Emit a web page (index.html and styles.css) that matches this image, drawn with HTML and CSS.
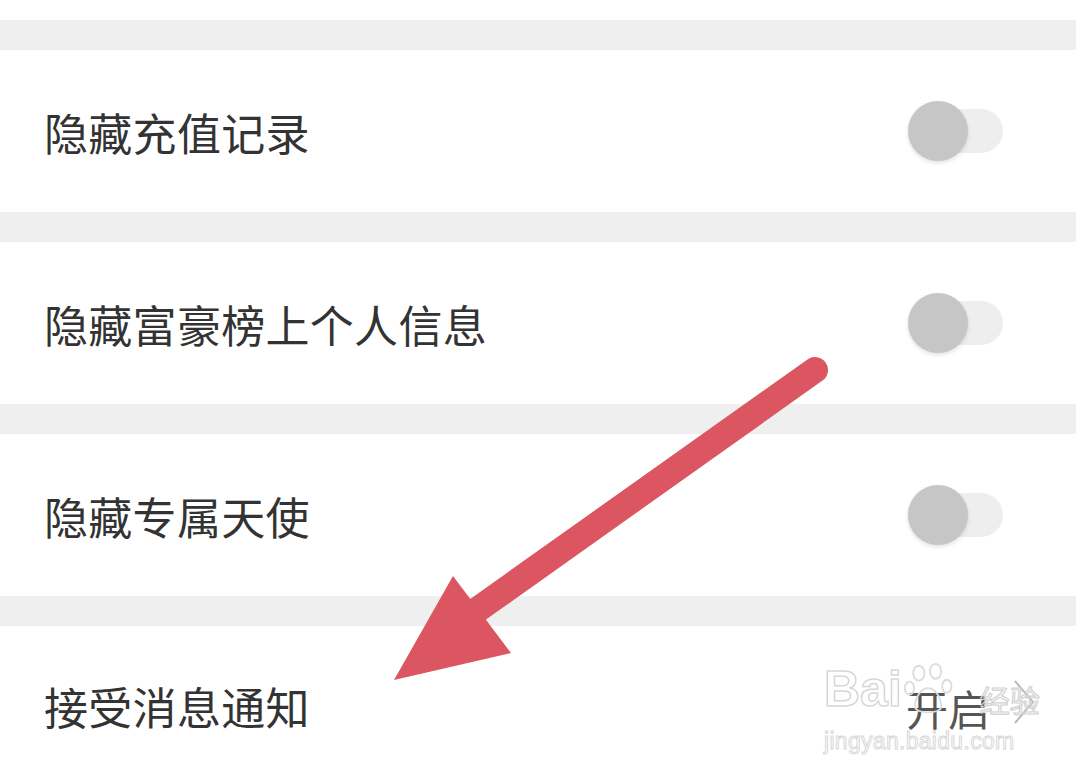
FILE: index.html
```html
<!DOCTYPE html>
<html>
<head>
<meta charset="utf-8">
<meta name="viewport" content="width=device-width, initial-scale=1.0">
<title>隐私设置</title>
<link rel="stylesheet" href="styles.css">
</head>
<body>
<div class="page">
    <div class="top-strip"></div>
    <div class="gap"></div>
    <div class="row">
        <span class="label">隐藏充值记录</span>
        <div class="toggle"><span class="track"></span><span class="thumb"></span></div>
    </div>
    <div class="gap"></div>
    <div class="row">
        <span class="label">隐藏富豪榜上个人信息</span>
        <div class="toggle"><span class="track"></span><span class="thumb"></span></div>
    </div>
    <div class="gap"></div>
    <div class="row">
        <span class="label">隐藏专属天使</span>
        <div class="toggle"><span class="track"></span><span class="thumb"></span></div>
    </div>
    <div class="gap"></div>
    <div class="row row-last">
        <span class="label">接受消息通知</span>
        <div class="value">
            <span class="value-text">开启</span>
            <svg class="chevron" viewBox="0 0 24 48" width="24" height="48">
                <path d="M3 3 L21 24 L3 45" fill="none" stroke="#b8b8b8" stroke-width="2"/>
            </svg>
        </div>
    </div>

    <!-- red pointer drawn over the list -->
    <svg class="pointer" viewBox="0 0 1076 784" width="1076" height="784">
        <line x1="815" y1="370" x2="470" y2="615" stroke="#db5660" stroke-width="26" stroke-linecap="round"/>
        <polygon points="394,680 453,576 511,653" fill="#db5660"/>
    </svg>

    <!-- site watermark -->
    <div class="watermark">
        <div class="wm-line">
            <span class="wm-bai">Bai</span>
            <svg class="wm-paw" viewBox="0 0 60 60" width="56" height="56">
                <g fill="none" stroke="#dcdcdc" stroke-width="2">
                    <ellipse cx="18" cy="12" rx="6" ry="8"/>
                    <ellipse cx="36" cy="10" rx="6" ry="8"/>
                    <ellipse cx="8" cy="28" rx="5" ry="7"/>
                    <ellipse cx="48" cy="26" rx="5" ry="7"/>
                    <path d="M14 48 C14 36 22 28 28 28 C34 28 42 36 42 48 C42 56 14 56 14 48 Z"/>
                </g>
            </svg>
            <span class="wm-jy">经验</span>
        </div>
        <div class="wm-url">jingyan.baidu.com</div>
    </div>
</div>
</body>
</html>
```

FILE: styles.css
```css
body {
    margin: 0;
    padding: 0;
    background-color: #ffffff;
    font-family: "Noto Sans CJK SC", "Noto Sans", sans-serif;
    width: 1076px;
    height: 784px;
    overflow: hidden;
}
.page {
    position: relative;
    display: flex;
    flex-direction: column;
    width: 1076px;
    height: 784px;
}
.top-strip {
    height: 20px;
    background-color: #ffffff;
}
.gap {
    height: 30px;
    background-color: #efefef;
}
.row {
    height: 162px;
    display: flex;
    align-items: center;
    justify-content: space-between;
    padding: 0 73px 0 44px;
    background-color: #ffffff;
}
.row-last {
    height: 158px;
    padding-right: 40px;
}
.label {
    font-size: 44px;
    color: #333333;
    letter-spacing: 0.3px;
    line-height: 1;
    padding-top: 2px;
}
.toggle {
    position: relative;
    width: 95px;
    height: 60px;
    display: flex;
    align-items: center;
    justify-content: flex-end;
}
.track {
    width: 80px;
    height: 44px;
    border-radius: 22px;
    background-color: #eeeeee;
}
.thumb {
    position: absolute;
    left: 0;
    top: 0;
    width: 60px;
    height: 60px;
    border-radius: 50%;
    background-color: #c6c6c6;
    box-shadow: 0 2px 4px rgba(0, 0, 0, 0.12);
}
.value {
    display: flex;
    align-items: center;
    gap: 22px;
    margin-top: 6px;
}
.value-text {
    font-size: 42px;
    color: #555555;
    line-height: 1;
}
.chevron {
    display: block;
    margin-top: -12px;
}
.pointer {
    position: absolute;
    left: 0;
    top: 0;
    pointer-events: none;
}
.watermark {
    position: absolute;
    left: 824px;
    top: 662px;
    pointer-events: none;
    font-family: "Liberation Sans", Arial, sans-serif;
}
.wm-line {
    display: flex;
    align-items: flex-end;
}
.wm-bai {
    font-size: 50px;
    font-weight: bold;
    line-height: 1;
    color: transparent;
    -webkit-text-stroke: 1.5px #d6d6d6;
}
.wm-paw {
    display: block;
    margin: 0 0 -4px 0;
}
.wm-jy {
    font-family: "Noto Sans CJK SC", sans-serif;
    font-size: 30px;
    line-height: 1;
    color: transparent;
    -webkit-text-stroke: 1.2px #d2d2d2;
    margin-left: 22px;
}
.wm-url {
    font-size: 23px;
    line-height: 1;
    color: transparent;
    -webkit-text-stroke: 1px #d8d8d8;
    margin-top: 16px;
    letter-spacing: 0.3px;
}
```
